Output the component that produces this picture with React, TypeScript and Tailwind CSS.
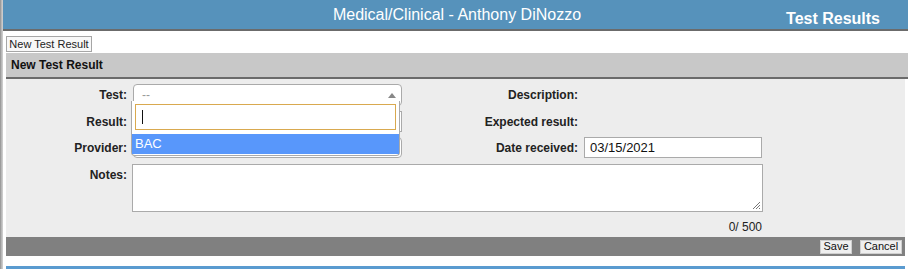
import React from "react";

export default function App() {
  const label = "text-[12px] font-bold text-[#222] text-right leading-none";
  return (
    <div className="flex w-[908px] h-[269px] overflow-hidden bg-white font-['Liberation_Sans',Arial,sans-serif]">
      <div className="w-[3px] shrink-0 bg-gradient-to-r from-[#8f8f8f] via-[#b8b8b8] to-[#d4d4d4]" />
      <div className="flex-1 flex flex-col">
        <div className="h-[1px] bg-white" />
        <div className="relative h-[31px] shrink-0 bg-[#5692bb] border-b-2 border-[#6b6b6b] flex items-center justify-center">
          <span className="text-white text-[16px] pl-[3px]">Medical/Clinical - Anthony DiNozzo</span>
          <span className="absolute right-[28px] top-[7px] text-white text-[16px] font-bold">Test Results</span>
        </div>
        <div className="pl-[3px] flex flex-col">
          <div className="h-[22px] pt-[5px] flex">
            <button className="h-[16px] w-[86px] border border-[#a6a6a6] bg-[#f8f8f8] text-[11px] text-[#222] leading-none flex items-center justify-center">
              New Test Result
            </button>
          </div>
          <div className="h-[26px] bg-[#c8c8c8] border-b-2 border-[#6b6b6b] flex items-center pl-[5px]">
            <span className="text-[12px] font-bold text-[#111]">New Test Result</span>
          </div>
          <div className="relative h-[158px] mr-[3px] bg-[#ededed] pt-[5px]">
            {/* Row 1 */}
            <div className="flex h-[22px] items-center">
              <div className={`w-[121px] ${label}`}>Test:</div>
              <div className="ml-[6px] w-[269px] h-[22px] bg-white border border-[#aaa] rounded-[4px] relative flex items-center pl-[8px]">
                <span className="text-[12px] text-[#999]">--</span>
                <svg className="absolute right-[5px] top-[8px]" width="8" height="5" viewBox="0 0 8 5">
                  <path d="M0 5 L4 0 L8 5 Z" fill="#888" />
                </svg>
              </div>
              <div className={`w-[176px] ${label}`}>Description:</div>
            </div>
            {/* Row 2 */}
            <div className="flex h-[21px] items-center mt-[5px]">
              <div className={`w-[121px] ${label}`}>Result:</div>
              <div className="ml-[6px] w-[269px] h-[21px] bg-white border border-[#aaa]" />
              <div className={`w-[176px] ${label}`}>Expected result:</div>
            </div>
            {/* Row 3 */}
            <div className="flex h-[21px] items-center mt-[5px]">
              <div className={`w-[121px] ${label}`}>Provider:</div>
              <div className="ml-[6px] w-[269px] h-[21px] bg-white border border-[#aaa] rounded-[4px]" />
              <div className={`w-[176px] ${label}`}>Date received:</div>
              <div className="ml-[6px] w-[178px] h-[21px] bg-white border border-[#aaa] flex items-center pl-[5px]">
                <span className="text-[13px] text-[#111]">03/15/2021</span>
              </div>
            </div>
            {/* Row 4 */}
            <div className="flex mt-[6px]">
              <div className={`w-[121px] pt-[5px] ${label}`}>Notes:</div>
              <div className="ml-[5px] w-[631px] h-[48px] bg-white border border-[#aaa] relative">
                <svg className="absolute right-[1px] bottom-[1px]" width="9" height="9" viewBox="0 0 9 9">
                  <path d="M8 1 L1 8 M8 4 L4 8 M8 7 L7 8" stroke="#777" strokeWidth="1" />
                </svg>
              </div>
            </div>
            <div className="w-[756px] text-right text-[12px] text-[#222] mt-[6px]">0/ 500</div>

            {/* Dropdown overlay */}
            <div className="absolute left-[125px] top-[22px] w-[269px] h-[55px] bg-white border border-[#aaa] border-t-0 rounded-b-[4px] flex flex-col">
              <div className="mx-[3px] mt-[3px] h-[26px] border border-[#d9a94f] bg-white flex items-center pl-[6px]">
                <div className="w-[1px] h-[14px] bg-[#111]" />
              </div>
              <div className="mt-[4px] h-[20px] bg-[#5897fb] flex items-center pl-[3px]">
                <span className="text-[13px] text-white">BAC</span>
              </div>
            </div>
          </div>
          <div className="h-[19px] mr-[3px] bg-[#808080] flex items-center justify-end gap-[8px] pr-[3px]">
            <button className="h-[14px] w-[32px] bg-[#efefef] border border-[#cfcfcf] text-[11px] text-[#111] leading-none flex items-center justify-center">
              Save
            </button>
            <button className="h-[14px] w-[42px] bg-[#efefef] border border-[#cfcfcf] text-[11px] text-[#111] leading-none flex items-center justify-center">
              Cancel
            </button>
          </div>
          <div className="h-[10px]" />
          <div className="h-[3px] mr-[3px] bg-[#5a9bd0]" />
        </div>
      </div>
    </div>
  );
}
